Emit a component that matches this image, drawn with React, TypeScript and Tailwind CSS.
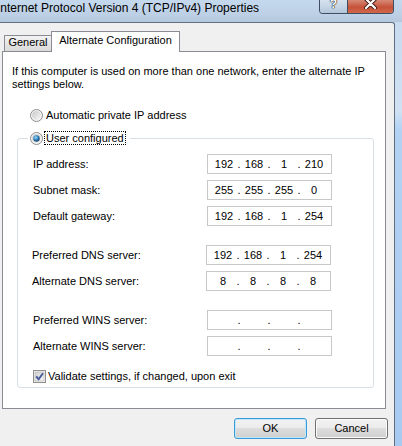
import React from 'react';

const Radio = ({ checked }: { checked?: boolean }) => (
  <svg width="13" height="13" viewBox="0 0 13 13" className="shrink-0">
    <defs>
      <linearGradient id={checked ? 'rgOn' : 'rgOff'} x1="0" y1="0" x2="1" y2="1">
        <stop offset="0" stopColor="#c8c8c8" />
        <stop offset="1" stopColor="#f8f8f8" />
      </linearGradient>
      <radialGradient id="dot" cx="0.4" cy="0.35" r="0.7">
        <stop offset="0" stopColor="#a8e4fb" />
        <stop offset="0.45" stopColor="#3b8cc4" />
        <stop offset="1" stopColor="#0d3a62" />
      </radialGradient>
    </defs>
    <circle cx="6.5" cy="6.5" r="6" fill="#f4f4f4" stroke="#8d8d8d" />
    <circle cx="6.5" cy="6.5" r="4.5" fill={`url(#${checked ? 'rgOn' : 'rgOff'})`} />
    {checked && <circle cx="6.5" cy="6.5" r="3.2" fill="url(#dot)" />}
  </svg>
);

const IpField = ({ parts }: { parts: string[] }) => (
  <div className="flex h-[20px] w-[125px] items-center border border-[#c8c8c8] bg-white pl-[4px] leading-[13px]">
    {parts.map((p, i) => (
      <React.Fragment key={i}>
        {i > 0 && <span className="w-[6px] text-center">.</span>}
        <span className="w-[24px] text-center">{p}</span>
      </React.Fragment>
    ))}
  </div>
);

const Row = ({ label, parts, className }: { label: string; parts: string[]; className: string }) => (
  <div className={`flex h-[20px] items-center ${className}`}>
    <span className="w-[174px] leading-[13px]">{label}</span>
    <IpField parts={parts} />
  </div>
);

export default function App() {
  return (
    <div className="flex h-[446px] w-[402px] flex-col overflow-hidden bg-[linear-gradient(180deg,#c6daee_0%,#cfe1f3_25%,#b3d2f3_29%,#a8caf1_100%)] font-['Liberation_Sans',Arial,sans-serif] text-[11px] text-black">
      {/* Title bar */}
      <div className="flex h-[22px] shrink-0 items-start justify-between bg-[linear-gradient(180deg,#c5d9ee,#bccfe4_70%,#b4c7dc)] pr-[8px]">
        <span className="ml-[-3px] mt-[1px] whitespace-nowrap text-[12px] leading-[14px]">
          Internet Protocol Version 4 (TCP/IPv4) Properties
        </span>
        <div className="flex h-[14px] overflow-hidden rounded-b-[4px] border border-t-0 border-[#3f4e60]">
          <div className="flex w-[28px] justify-center border-r border-[#3f4e60] bg-[linear-gradient(180deg,#d6e2ee,#c3d3e3_60%,#b2c5d9)]">
            <span className="mt-[-2px] text-[12px] font-bold leading-[13px] text-white [text-shadow:0_0_1px_#222,0_0_1px_#222,0_0_1px_#222]">
              ?
            </span>
          </div>
          <div className="flex w-[45px] justify-center bg-[linear-gradient(180deg,#d68a77,#c7523a_55%,#d0684a)]">
            <svg width="13" height="11" viewBox="0 0 13 11" className="mt-[-2px]">
              <path d="M2 1 L11 10 M11 1 L2 10" stroke="#3a1a14" strokeWidth="4" strokeLinecap="round" />
              <path d="M2 1 L11 10 M11 1 L2 10" stroke="#ffffff" strokeWidth="2.2" strokeLinecap="round" />
            </svg>
          </div>
        </div>
      </div>

      {/* Dialog body */}
      <div className="flex h-[424px] w-[395px] flex-col rounded-tr-[3px] border-r border-t border-[#5f6f80] bg-[#f0f0f0]">
        {/* Tabs */}
        <div className="mt-[8px] flex h-[21px] items-start">
          <div className="ml-[4px] mt-[4px] flex h-[16px] w-[48px] justify-center border border-b-0 border-[#898c95] bg-[linear-gradient(180deg,#f3f3f3,#e6e6e6_50%,#d9d9d9)] leading-[13px]">
            General
          </div>
          <div className="relative z-10 ml-[-1px] flex h-[21px] w-[129px] justify-center border border-b-0 border-[#898c95] bg-white pt-[2px] leading-[13px]">
            Alternate Configuration
          </div>
        </div>

        {/* Tab panel */}
        <div className="ml-[2px] mt-[-1px] flex h-[358px] w-[384px] flex-col border border-[#898c95] bg-white pt-[13px]">
          <p className="pl-[9px] leading-[13px]">
            If this computer is used on more than one network, enter the alternate IP
            <br />
            settings below.
          </p>

          <div className="ml-[27px] mt-[18px] flex h-[13px] items-center gap-[3px]">
            <Radio />
            <span className="leading-[13px]">Automatic private IP address</span>
          </div>

          <fieldset className="ml-[14px] mt-[9px] w-[357px] rounded-[3px] border border-[#d5dfe5] pb-[4px] pl-[15px] pt-[9px]">
            <legend className="ml-[-5px] pl-[2px] pr-[4px]">
              <div className="flex items-center">
                <Radio checked />
                <span className="ml-[1px] border border-dotted border-black px-[1px] leading-[12px]">
                  User configured
                </span>
              </div>
            </legend>

            <Row label="IP address:" parts={['192', '168', '1', '210']} className="" />
            <Row label="Subnet mask:" parts={['255', '255', '255', '0']} className="mt-[6px]" />
            <Row label="Default gateway:" parts={['192', '168', '1', '254']} className="mt-[6px]" />

            <Row label="Preferred DNS server:" parts={['192', '168', '1', '254']} className="ml-[-1px] mt-[19px]" />
            <Row label="Alternate DNS server:" parts={['8', '8', '8', '8']} className="ml-[-1px] mt-[6px]" />

            <Row label="Preferred WINS server:" parts={['', '', '', '']} className="mt-[19px]" />
            <Row label="Alternate WINS server:" parts={['', '', '', '']} className="mt-[6px]" />

            <div className="mt-[14px] flex h-[13px] items-center gap-[2px]">
              <svg width="13" height="13" viewBox="0 0 13 13" className="shrink-0">
                <defs>
                  <linearGradient id="cb" x1="0" y1="0" x2="1" y2="1">
                    <stop offset="0" stopColor="#cfcfcf" />
                    <stop offset="1" stopColor="#f7f7f7" />
                  </linearGradient>
                </defs>
                <rect x="0.5" y="0.5" width="12" height="12" fill="#f4f4f4" stroke="#8e8f8f" />
                <rect x="2" y="2" width="9" height="9" fill="url(#cb)" stroke="#b5b5b5" strokeWidth="0.6" />
                <path d="M3.2 6.4 L5.6 9.2 L10 3.2" fill="none" stroke="#46589a" strokeWidth="1.9" />
              </svg>
              <span className="leading-[13px]">Validate settings, if changed, upon exit</span>
            </div>
          </fieldset>
        </div>

        {/* Buttons */}
        <div className="mt-[9px] flex justify-end gap-[8px] pr-[6px]">
          <button className="h-[21px] w-[73px] rounded-[3px] border border-[#3a9ad8] bg-[linear-gradient(180deg,#f2f2f2,#ebebeb_50%,#dddddd_50%,#cfcfcf)] leading-[13px] shadow-[inset_0_0_0_1px_#bfe8fb]">
            OK
          </button>
          <button className="h-[21px] w-[73px] rounded-[3px] border border-[#707070] bg-[linear-gradient(180deg,#f2f2f2,#ebebeb_50%,#dddddd_50%,#cfcfcf)] leading-[13px] shadow-[inset_0_0_0_1px_#fbfbfb]">
            Cancel
          </button>
        </div>
      </div>
    </div>
  );
}
